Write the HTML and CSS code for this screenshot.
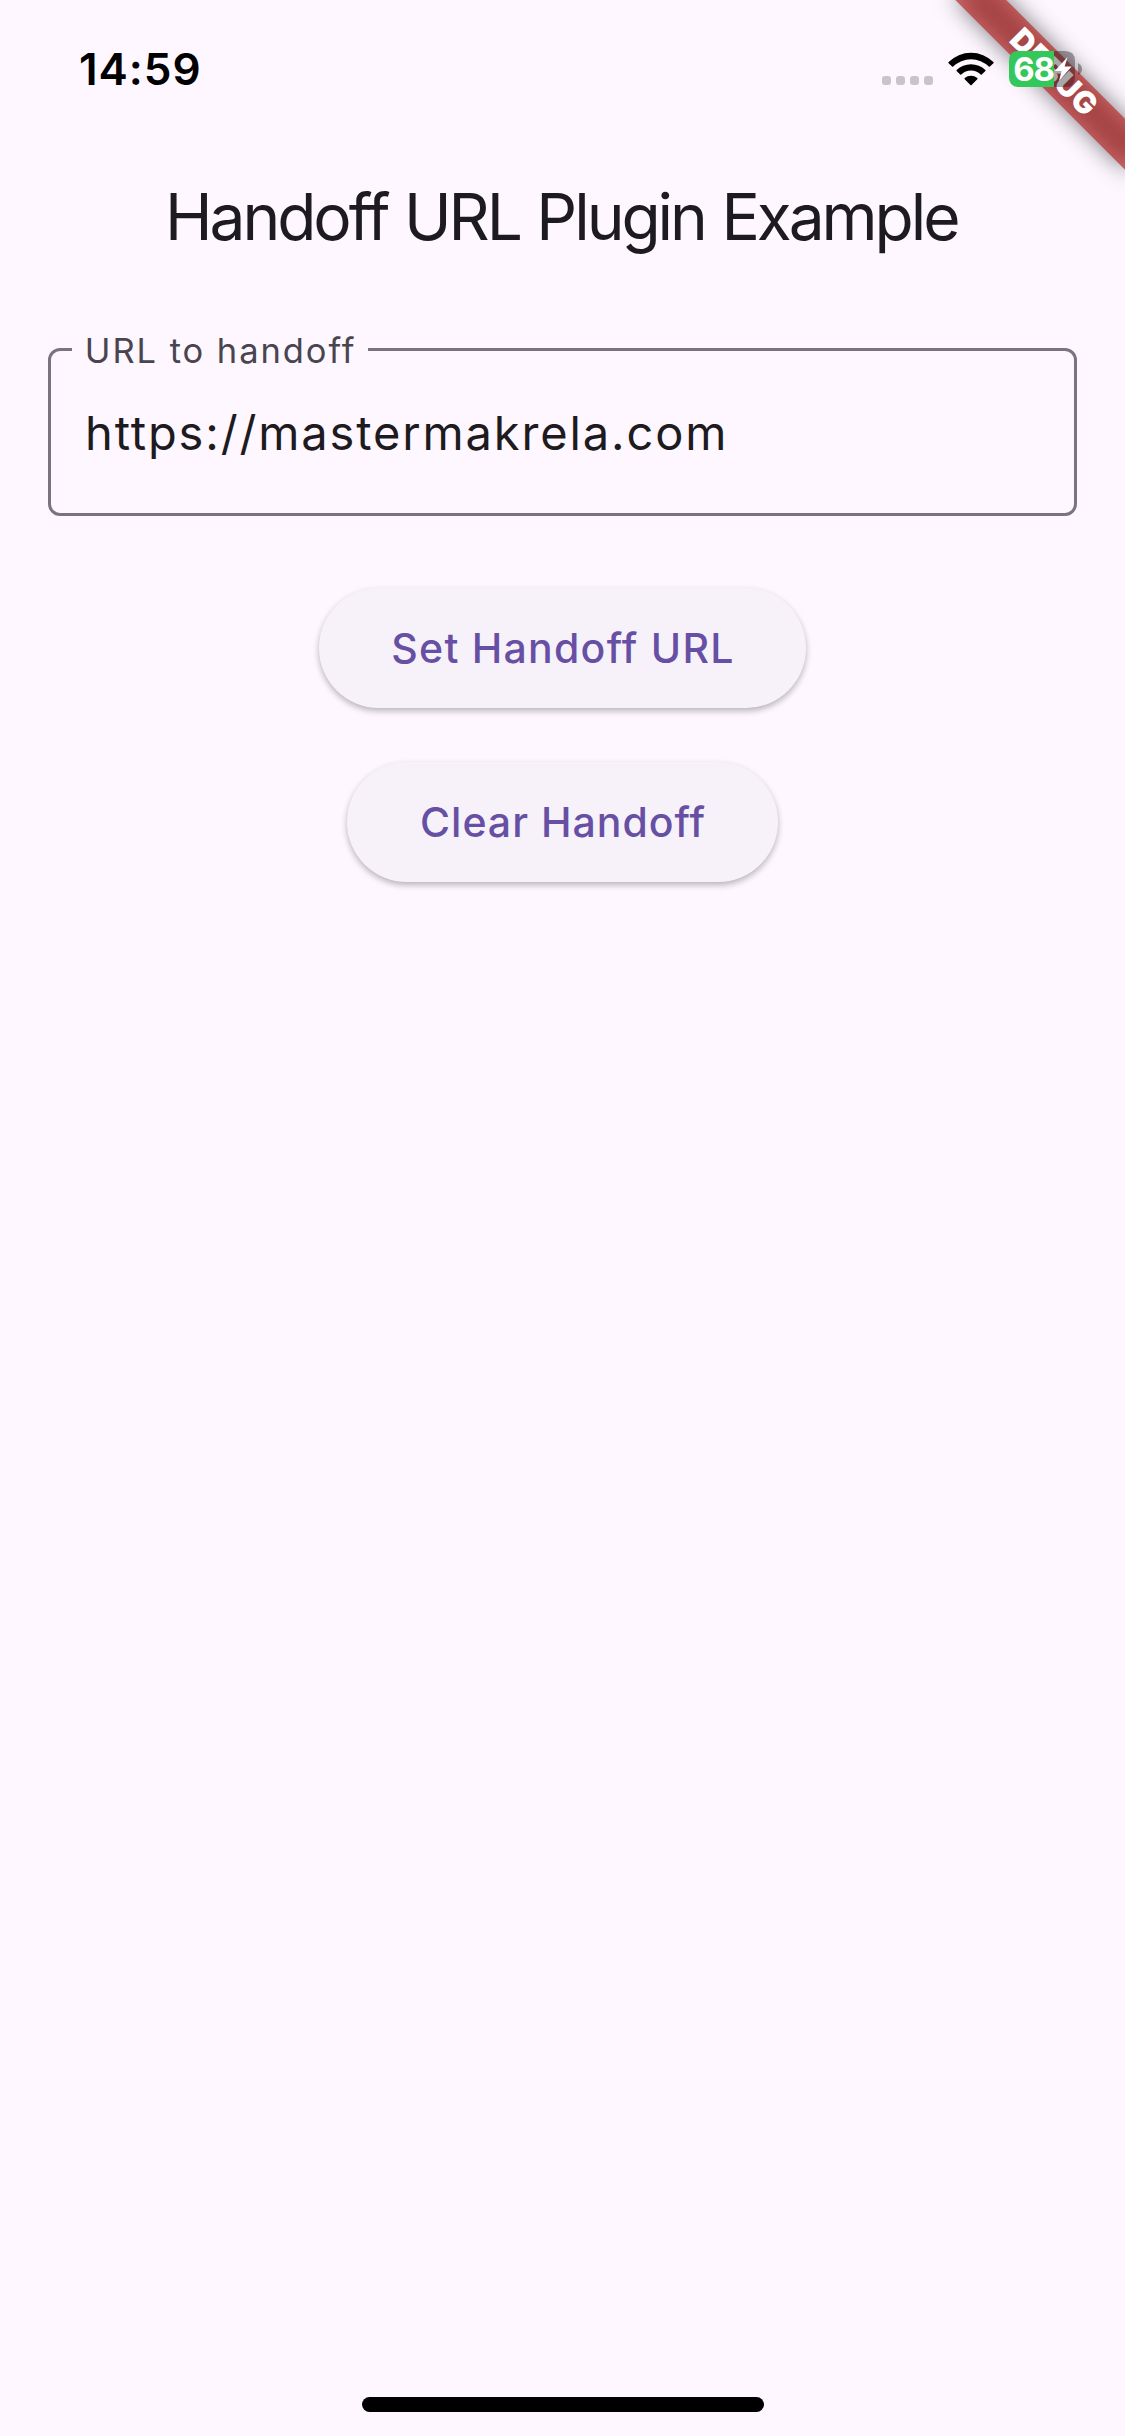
FILE: index.html
```html
<!DOCTYPE html>
<html lang="en">
<head>
<meta charset="utf-8">
<title>Handoff URL Plugin Example</title>
<link rel="stylesheet" href="styles.css">
</head>
<body>
<div class="app">
  <header class="status-bar">
    <time class="clock">14:59</time>
    <div class="indicators">
      <svg class="signal" width="51" height="9" viewBox="0 0 51 9">
        <rect width="9" height="9" rx="3"/>
        <rect x="14" width="9" height="9" rx="3"/>
        <rect x="28" width="9" height="9" rx="3"/>
        <rect x="42" width="9" height="9" rx="3"/>
      </svg>
      <svg class="wifi" width="46" height="34" viewBox="0 0 46 34">
        <path d="M0.6 10.1 A31.6 31.6 0 0 1 45.4 10.1 Q45.9 10.7 45.4 11.2 L41.9 14.6 Q41.4 15.1 40.8 14.6 A25.5 25.5 0 0 0 5.2 14.6 Q4.6 15.1 4.1 14.6 L0.6 11.2 Q0.1 10.7 0.6 10.1 Z"/>
        <path d="M8.6 18 A20.6 20.6 0 0 1 37.4 18 Q37.9 18.6 37.4 19.1 L33.8 22.6 Q33.3 23 32.7 22.6 A13.8 13.8 0 0 0 13.3 22.6 Q12.7 23 12.2 22.6 L8.6 19.1 Q8.1 18.6 8.6 18 Z"/>
        <path d="M16.7 26.1 A9.6 9.6 0 0 1 29.3 26.1 Q29.8 26.7 29.3 27.2 L23.6 32.9 Q23 33.4 22.4 32.9 L16.7 27.2 Q16.2 26.7 16.7 26.1 Z"/>
      </svg>
      <svg class="battery" width="73" height="36" viewBox="0 0 73 36">
        <path class="battery-rest" d="M45 0 H56 Q66 0 66 10 V26 Q66 36 56 36 H45 Z"/>
        <path class="battery-rest" d="M69 12 Q73 14 73 18 Q73 22 69 24 Z"/>
        <path class="battery-level" d="M10 0 H45 V36 H10 Q0 36 0 26 V10 Q0 0 10 0 Z"/>
        <text class="battery-text" x="4.2" y="29.8">68</text>
        <path class="bolt" d="M58.6 6 L45.8 20 H52.6 L50 30 L62.6 15.6 H55.6 Z"/>
      </svg>
    </div>
  </header>

  <main class="content">
    <h1 class="title">Handoff URL Plugin Example</h1>
    <fieldset class="field">
      <legend class="field-label">URL to handoff</legend>
      <div class="field-value">https://mastermakrela.com</div>
    </fieldset>
    <div class="actions">
      <button class="button button-set">Set Handoff URL</button>
      <button class="button button-clear">Clear Handoff</button>
    </div>
  </main>

  <div class="home-indicator"></div>

  <svg class="debug-banner" width="225" height="225" viewBox="-225 0 225 225">
    <defs>
      <filter id="banner-shadow" x="-50%" y="-200%" width="200%" height="500%">
        <feGaussianBlur stdDeviation="11.9"/>
      </filter>
    </defs>
    <g transform="rotate(45)">
      <rect x="-120" y="84" width="240" height="36" fill="#000" fill-opacity=".498" filter="url(#banner-shadow)"/>
      <rect x="-120" y="84" width="240" height="36" fill="#b71c1c" fill-opacity=".627"/>
      <text class="debug-text" x="0.9" y="111.8" text-anchor="middle">DEBUG</text>
    </g>
  </svg>
</div>
</body>
</html>
```
FILE: styles.css
```css
* { box-sizing: border-box; }

body {
  margin: 0;
  background: #fef7ff;
  color: #1d1b20;
  font-family: Inter, "Liberation Sans", sans-serif;
}

.app {
  position: relative;
  display: flex;
  flex-direction: column;
  align-items: center;
  width: 1125px;
  height: 2436px;
  overflow: hidden;
  background: #fef7ff;
}

/* Status bar sits above the debug banner */
.status-bar {
  position: relative;
  z-index: 2;
  display: flex;
  justify-content: space-between;
  align-items: center;
  width: 100%;
  height: 138px;
  padding: 0 43px 0 79px;
}

.clock {
  color: #000;
  font-size: 44px;
  font-weight: 600;
  line-height: 60px;
  letter-spacing: .95px;
}

.indicators {
  display: flex;
  align-items: center;
}

.signal {
  margin: 23px 15px 0 0;
  fill: #c9c4cb;
}

.wifi { margin-right: 15px; }

.battery { overflow: visible; }
.battery-rest { fill: rgba(20, 10, 20, .36); }
.battery-level { fill: #34c759; }
.bolt { fill: #fff; }

.battery-text {
  fill: #fff;
  font-size: 33px;
  font-weight: 700;
  letter-spacing: -1.2px;
}

.content {
  display: flex;
  flex-direction: column;
  width: 100%;
  padding: 39px 48px 0;
}

.title {
  margin: 0;
  padding-left: 117px;
  font-size: 64px;
  font-weight: 400;
  line-height: 80px;
  letter-spacing: -3.05px;
  word-spacing: 1.6px;
  font-kerning: normal;
  white-space: nowrap;
}

.field {
  height: 188px;
  margin: 71px 0 0;
  padding: 0 21px;
  border: 3px solid #79747e;
  border-radius: 12px;
}

.field-label {
  width: 296px;
  padding: 2px 0 0 12.8px;
  color: #49454f;
  font-size: 34.5px;
  line-height: 41px;
  letter-spacing: 1.94px;
  white-space: nowrap;
}

.field-value {
  padding: 32px 0 0 13px;
  font-size: 47px;
  line-height: 60px;
  letter-spacing: 1.86px;
}

.actions {
  display: flex;
  flex-direction: column;
  align-items: center;
  gap: 54px;
  padding-top: 72px;
}

.button {
  height: 120px;
  padding: 0;
  border: 0;
  border-radius: 60px;
  background: #f7f2fa;
  box-shadow: 0 3px 6px rgba(0, 0, 0, .28);
  color: #6750a4;
  font: 500 41px Inter, "Liberation Sans", sans-serif;
}

.button-set {
  width: 487px;
  padding-left: 1px;
  letter-spacing: 1.25px;
}

.button-clear {
  width: 431px;
  padding-left: 1px;
  letter-spacing: 1px;
}

.home-indicator {
  width: 402px;
  height: 15px;
  margin: auto 0 24px;
  border-radius: 8px;
  background: #000;
}

.debug-banner {
  position: absolute;
  top: 0;
  right: 0;
}

.debug-text {
  fill: #fff;
  font-size: 30.6px;
  font-weight: 900;
  letter-spacing: .5px;
}
```
